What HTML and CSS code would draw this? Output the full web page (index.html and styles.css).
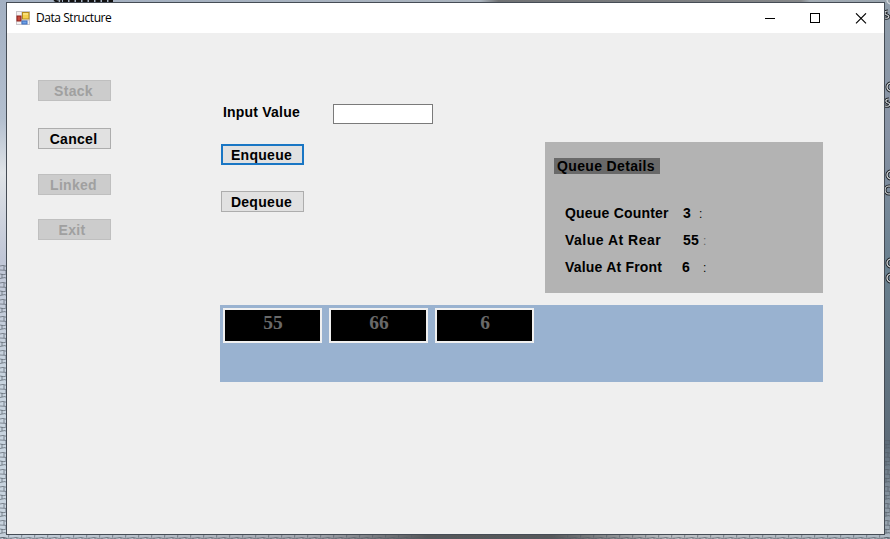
FILE: index.html
```html
<!DOCTYPE html>
<html lang="en">
<head>
<meta charset="utf-8">
<title>Data Structure</title>
<link rel="stylesheet" href="styles.css">
</head>
<body>
<svg class="desktop" viewBox="0 0 890 539" aria-hidden="true">
  <defs>
    <linearGradient id="left" x1="0" y1="0" x2="0" y2="1">
      <stop offset="0" stop-color="#a3b0c2"/><stop offset=".22" stop-color="#b3bfcf"/><stop offset=".32" stop-color="#dfe3e7"/><stop offset=".48" stop-color="#c0c6d6"/><stop offset=".7" stop-color="#c8d4df"/><stop offset="1" stop-color="#c8d4df"/>
    </linearGradient>
    <linearGradient id="right" x1="0" y1="0" x2="0" y2="1">
      <stop offset="0" stop-color="#8f9daa"/><stop offset=".25" stop-color="#8792a4"/><stop offset=".5" stop-color="#687f8e"/><stop offset=".82" stop-color="#5d6b78"/><stop offset="1" stop-color="#a3afba"/>
    </linearGradient>
    <linearGradient id="bottom">
      <stop offset="0" stop-color="#c5d0db"/><stop offset=".35" stop-color="#a5a8b0"/><stop offset=".48" stop-color="#565759"/><stop offset=".62" stop-color="#57585a"/><stop offset=".75" stop-color="#bcbfc3"/><stop offset="1" stop-color="#aeb9c3"/>
    </linearGradient>
    <linearGradient id="top">
      <stop offset="0" stop-color="#a3b0c2"/><stop offset=".54" stop-color="#aab3bd"/><stop offset=".56" stop-color="#707274"/><stop offset=".9" stop-color="#858789"/><stop offset=".91" stop-color="#a3acb4"/><stop offset="1" stop-color="#99a4ae"/>
    </linearGradient>
    <pattern id="bricks" width="13" height="17" patternUnits="userSpaceOnUse">
      <path d="M0 2l4 .7 3-1 6 .3M0 6.500l5-1 2 1.500 6-.5M0 11l3-.6 4 1 6-.4M0 15l6 .4 3-1 4 .6M2 2v4M9 6.500l-.5 4M4 11v4M6 15.500V17M6 0v1.500M11 11v3" fill="none" stroke="#505862" stroke-width=".9" opacity=".7"/>
    </pattern>
  </defs>
  <rect width="7" height="539" fill="url(#left)"/>
  <rect x="884" width="6" height="539" fill="url(#right)"/>
  <rect width="890" height="3" fill="url(#top)"/>
  <rect y="534" width="890" height="5" fill="url(#bottom)"/>
  <rect y="265" width="7" height="274" fill="url(#bricks)"/>
  <rect x="884" y="440" width="6" height="99" fill="url(#bricks)"/>
  <rect y="534" width="890" height="5" fill="url(#bricks)"/>
  <path d="M54 0l3 1.500 5-.5M63 1h50" fill="none" stroke="#111" stroke-width="2" stroke-dasharray="5 1.5"/>
  <g fill="none" stroke="#202428" stroke-width="3">
    <circle cx="891" cy="87" r="4"/><circle cx="891" cy="175" r="4"/><circle cx="891" cy="263" r="4"/><circle cx="889" cy="190" r="4"/><circle cx="891" cy="278" r="4"/>
    <path d="M888 11c-4 0-4 3-1 4s2 4-2 3M889 99c-4 0-4 3-1 4s2 4-3 3"/>
  </g>
  <g fill="none" stroke="#d5d9dc" stroke-width="1.2">
    <circle cx="891" cy="0" r="4"/><circle cx="891" cy="87" r="4"/><circle cx="891" cy="175" r="4"/><circle cx="891" cy="263" r="4"/><circle cx="889" cy="190" r="4"/><circle cx="891" cy="278" r="4"/>
    <path d="M888 11c-4 0-4 3-1 4s2 4-2 3M889 99c-4 0-4 3-1 4s2 4-3 3"/>
  </g>
</svg>
<div class="window">
  <header class="titlebar">
    <svg class="app-icon" width="14" height="14" viewBox="0 0 14 14">
      <rect x=".5" y=".5" width="13" height="13" fill="#f4f2f2" stroke="#c9c6cb"/>
      <path d="M5.500 1v12M1 9.500h12" stroke="#d5d1d6"/>
      <rect x="1" y="5" width="4" height="5" fill="#c64a3c" stroke="#8c1f1a"/>
      <rect x="6.5" y="1.5" width="6.5" height="6.5" fill="#f5cf4c" stroke="#b38a1c"/>
      <path d="M7 3h5" stroke="#fff0a0"/>
      <rect x="6" y="10" width="5" height="3" fill="#6fa0e4" stroke="#3c6fc0"/>
    </svg>
    <span class="title">Data Structure</span>
    <svg class="controls" width="103" height="11" viewBox="0 0 103 11" fill="none" stroke="#000">
      <path d="M0 5.500h10"/>
      <rect x="45.5" y=".5" width="9" height="9"/>
      <path d="M91 .3l10 10M101 .3l-10 10" stroke-width="1.1"/>
    </svg>
  </header>
  <div class="client">
    <nav class="menu">
      <button class="btn stack" disabled>Stack</button>
      <button class="btn cancel">Cancel</button>
      <button class="btn linked" disabled>Linked</button>
      <button class="btn exit" disabled>Exit</button>
    </nav>
    <main class="main">
      <div class="top">
        <div class="form">
          <div class="field">
            <label for="value">Input Value</label>
            <input id="value" type="text">
          </div>
          <button class="btn wide focused">Enqueue</button>
          <button class="btn wide">Dequeue</button>
        </div>
        <section class="details">
          <h2>Queue Details</h2>
          <div class="row"><span class="name">Queue Counter</span><span class="num">3</span><span class="colon near">:</span></div>
          <div class="row"><span class="name rear">Value At Rear</span><span class="num">55</span><span class="colon faint">:</span></div>
          <div class="row"><span class="name">Value At Front</span><span class="num shift">6</span><span class="colon">:</span></div>
        </section>
      </div>
      <div class="queue">
        <div class="cell">55</div>
        <div class="cell">66</div>
        <div class="cell">6</div>
      </div>
    </main>
  </div>
</div>
</body>
</html>
```

FILE: styles.css
```css
* { box-sizing: border-box; }
body {
  margin: 0;
  height: 539px;
  padding-top: 2px;
  overflow: hidden;
  background: #a9b5c2;
  font: bold 14px/16px "Liberation Sans", Arial, sans-serif;
  letter-spacing: .2px;
  color: #000;
}
.desktop { position: absolute; top: 0; left: 0; width: 890px; height: 539px; }
.window {
  position: relative;
  width: 879px;
  height: 533px;
  margin-left: 6px;
  border: 1px solid #454c55;
  background: #efefef;
}
.titlebar {
  display: flex;
  align-items: center;
  height: 30px;
  padding: 0 16px 0 9px;
  background: #fff;
}
.title {
  flex: 1;
  margin-left: 6px;
  font: 12px/16px "Open Sans", "Noto Sans", sans-serif;
  letter-spacing: -.45px;
}
.client { display: flex; }
.menu {
  display: flex;
  flex-direction: column;
  width: 213px;
  padding: 47px 0 0 31px;
}
.btn {
  width: 73px;
  height: 21px;
  padding: 1px 2px 0 0;
  border: 1px solid #adadad;
  background: #e1e1e1;
  color: #000;
  font: inherit;
  letter-spacing: .3px;
  line-height: 16px;
  text-align: center;
}
.btn:disabled { background: #ccc; border-color: #bfbfbf; color: #a0a0a0; }
.cancel { margin-top: 27px; }
.linked { margin-top: 25px; }
.exit { margin-top: 24px; padding-right: 5px; }
.main { width: 603px; padding-top: 71px; }
.top { display: flex; height: 201px; }
.form { width: 325px; padding-left: 1px; }
.field { display: flex; padding-left: 2px; margin-bottom: 20px; }
.field label { width: 110px; }
.field input {
  width: 100px;
  height: 20px;
  border: 1px solid #7a7a7a;
  background: #fff;
}
.wide { display: block; width: 83px; margin-bottom: 26px; }
.focused { border: 2px solid #1976c4; }
.details {
  width: 278px;
  height: 151px;
  margin-top: 38px;
  padding: 16px 0 0 9px;
  background: #b3b3b3;
}
.details h2 {
  width: 106px;
  height: 16px;
  margin: 0 0 31px;
  padding-left: 3px;
  background: #696969;
  font: inherit;
  letter-spacing: .35px;
  line-height: 17px;
  white-space: nowrap;
}
.row { display: flex; height: 27px; padding-left: 11px; }
.name { width: 118px; }
.rear { letter-spacing: .5px; }
.num { width: 20px; }
.shift { margin-left: -1px; margin-right: 1px; }
.colon { padding-top: 1px; font-size: 12px; font-weight: normal; }
.near { margin-left: -4px; }
.faint { color: #666; }
.queue {
  display: flex;
  gap: 7px;
  height: 77px;
  padding: 3px 0 0 3px;
  background: #99b2d0;
}
.cell {
  width: 99px;
  height: 35px;
  padding-left: 1px;
  border: 2px solid #f0f0f0;
  background: #000;
  color: #696969;
  font: bold 19.5px/25px "Liberation Serif", "Times New Roman", serif;
  letter-spacing: 0;
  text-align: center;
}
```
